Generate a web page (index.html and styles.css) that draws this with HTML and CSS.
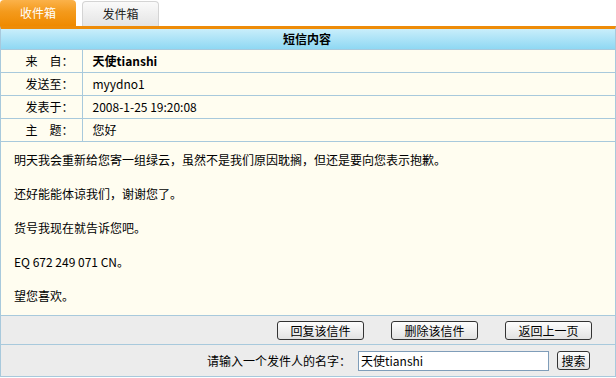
FILE: index.html
```html
<!DOCTYPE html>
<html lang="zh-CN">
<head>
    <meta charset="UTF-8">
    <title>短信内容</title>
    <link rel="stylesheet" href="styles.css">
</head>
<body>
    <div class="tabs">
        <a class="tab active" href="#">收件箱</a>
        <a class="tab" href="#">发件箱</a>
    </div>

    <div class="box">
        <div class="box-title">短信内容</div>

        <table class="info">
            <tr>
                <th>来　自：</th>
                <td><b>天使tianshi</b></td>
            </tr>
            <tr>
                <th>发送至：</th>
                <td>myydno1</td>
            </tr>
            <tr>
                <th>发表于：</th>
                <td>2008-1-25 19:20:08</td>
            </tr>
            <tr>
                <th>主　题：</th>
                <td>您好</td>
            </tr>
        </table>

        <div class="content">
            <p>明天我会重新给您寄一组绿云，虽然不是我们原因耽搁，但还是要向您表示抱歉。</p>
            <p>还好能能体谅我们，谢谢您了。</p>
            <p>货号我现在就告诉您吧。</p>
            <p>EQ 672 249 071 CN。</p>
            <p>望您喜欢。</p>
        </div>

        <div class="actions">
            <button type="button" class="btn">回复该信件</button>
            <button type="button" class="btn">删除该信件</button>
            <button type="button" class="btn">返回上一页</button>
        </div>

        <form class="search" onsubmit="event.preventDefault();">
            <label for="sender">请输入一个发件人的名字：</label>
            <input type="text" id="sender" value="天使tianshi">
            <button type="submit" class="btn btn-small">搜索</button>
        </form>
    </div>
</body>
</html>
```

FILE: styles.css
```css
/* 全体 */
body {
    margin: 0;
    width: 616px;
    font-family: "SimSun", "Noto Sans CJK SC", sans-serif;
    font-size: 12px;
    line-height: 16px;
    color: #000;
    background: #fff;
}

/* タブ */
.tabs {
    display: flex;
    align-items: flex-end;
    gap: 6px;
    height: 26px;
}

.tab {
    display: flex;
    align-items: center;
    justify-content: center;
    width: 75px;
    height: 24px;
    color: #222;
    text-decoration: none;
    border: 1px solid #d4d4d4;
    border-bottom: none;
    border-radius: 4px 4px 0 0;
    background: linear-gradient(to bottom, #fafafa, #e4e4e4);
}

.tab.active {
    width: 76px;
    height: 26px;
    color: #fff;
    border: none;
    background: linear-gradient(to bottom, #fbb24a 0%, #f49a1c 45%, #ef8a00 100%);
}

/* 本体 */
.box {
    border-top: 3px solid #ee8c08;
    border-left: 1px solid #a8c9dc;
    border-right: 1px solid #a8c9dc;
    border-bottom: 1px solid #a8c9dc;
    background: #fffdf0;
}

.box-title {
    height: 20px;
    line-height: 20px;
    text-align: center;
    font-weight: bold;
    padding-right: 2px;
    background: linear-gradient(to bottom, #c9eefb, #8fd8f3);
    border-bottom: 1px solid #a8c9dc;
}

.info {
    width: 100%;
    border-collapse: collapse;
}

.info th,
.info td {
    height: 22px;
    padding: 0;
    border-bottom: 1px solid #a8c9dc;
    font-weight: normal;
}

.info th {
    width: 81px;
    text-align: right;
    padding-right: 8px;
    box-sizing: border-box;
    border-right: 1px solid #a8c9dc;
}

.info td {
    padding-left: 10px;
}

.content {
    padding: 8px 13px 9px;
}

.content p {
    margin: 0 0 14px;
    line-height: 20px;
}

.content p:last-child {
    margin-bottom: 0;
}

/* ボタン */
.actions {
    display: flex;
    justify-content: flex-end;
    align-items: center;
    gap: 27px;
    height: 28px;
    padding-right: 23px;
    background: #ececec;
    border-top: 1px solid #a8c9dc;
    border-bottom: 1px solid #a8c9dc;
}

.btn {
    width: 87px;
    height: 19px;
    padding: 0;
    font-family: inherit;
    font-size: 12px;
    line-height: 17px;
    color: #000;
    border: 1px solid #333;
    border-radius: 3px;
    background: linear-gradient(to bottom, #fdfdfd, #e2e2e2);
}

.btn-small {
    width: 33px;
}

/* 検索 */
.search {
    display: flex;
    justify-content: flex-end;
    align-items: center;
    height: 31px;
    margin: 0;
    padding-right: 25px;
    background: #ececec;
}

.search label {
    margin-right: 7px;
}

.search input {
    width: 191px;
    height: 20px;
    margin: 0 8px 0 0;
    padding: 0 2px;
    box-sizing: border-box;
    font-family: inherit;
    font-size: 12px;
    border: 1px solid #7f9db9;
    background: #fff;
}
```
